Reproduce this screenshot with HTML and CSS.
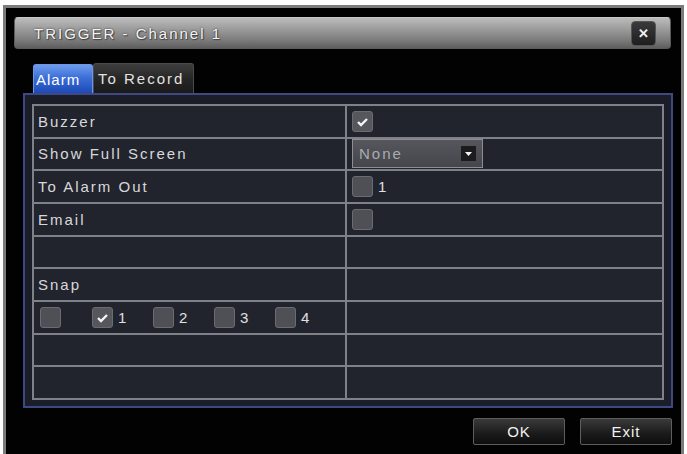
FILE: index.html
```html
<!DOCTYPE html>
<html lang="en">
<head>
    <meta charset="UTF-8">
    <title>TRIGGER - Channel 1</title>
    <link rel="stylesheet" href="styles.css">
</head>
<body>
<div class="dlg">
    <div class="titlebar">
        <span class="title">TRIGGER - Channel 1</span>
        <span class="close">&#x2715;</span>
    </div>
    <div class="tabs">
        <span class="tab on">Alarm</span><span class="tab">To Record</span>
    </div>
    <div class="panel">
        <div class="grid">
            <div class="cell">Buzzer</div>
            <div class="cell val"><span class="chk on"></span></div>

            <div class="cell">Show Full Screen</div>
            <div class="cell val">
                <span class="sel">None<i class="arrow"></i></span>
            </div>

            <div class="cell">To Alarm Out</div>
            <div class="cell val"><span class="chk"></span><span class="num">1</span></div>

            <div class="cell">Email</div>
            <div class="cell val"><span class="chk"></span></div>

            <div class="cell"></div>
            <div class="cell"></div>

            <div class="cell">Snap</div>
            <div class="cell"></div>

            <div class="cell snap">
                <span class="item first"><span class="chk"></span></span>
                <span class="item"><span class="chk on"></span><span class="num">1</span></span>
                <span class="item"><span class="chk"></span><span class="num">2</span></span>
                <span class="item"><span class="chk"></span><span class="num">3</span></span>
                <span class="item"><span class="chk"></span><span class="num">4</span></span>
            </div>
            <div class="cell"></div>

            <div class="cell"></div>
            <div class="cell"></div>

            <div class="cell"></div>
            <div class="cell"></div>
        </div>
    </div>
    <div class="btns">
        <span class="btn">OK</span><span class="btn">Exit</span>
    </div>
</div>
</body>
</html>
```

FILE: styles.css
```css
*{
    margin:0;
    padding:0;
    box-sizing: border-box;
}
html,body{
    width: 100%;
    height: 100%;
    overflow: hidden;
    background: #fff;
}
body{
    font-family: "Liberation Sans", Arial, sans-serif;
    font-size: 15px;
    letter-spacing: 2px;
    color: #d8d8da;
}
.dlg{
    width: 681px;
    height: 452px;
    margin: 5px 0 0 3px;
    border: 3px solid #7c7c7c;
    background: #020202;
}
/* title bar */
.titlebar{
    height: 32px;
    margin: 9px 10px 0 8px;
    padding: 0 14px 0 19px;
    display: flex;
    align-items: center;
    justify-content: space-between;
    border-radius: 4px;
    border: 1px solid #5a5a5a;
    border-top-color: #c8c8c8;
    background: linear-gradient(#bcbcbc, #999 40%, #7a7a7a 75%, #5e5e5e);
}
.title{
    color: #f4f4f4;
    text-shadow: 0 0 2px #333, 1px 1px 1px #444;
}
.close{
    width: 25px;
    height: 25px;
    margin-top: 1px;
    border-radius: 4px;
    border: 1px solid #555;
    background: linear-gradient(#3a3a3a, #1e1e1e);
    color: #f2f2f2;
    font-size: 13px;
    font-weight: bold;
    letter-spacing: 0;
    line-height: 23px;
    text-align: center;
}
/* tabs */
.tabs{
    height: 29px;
    margin-top: 15px;
    padding-left: 27px;
    display: flex;
    align-items: flex-end;
}
.tab{
    width: 101px;
    height: 30px;
    padding-left: 4px;
    line-height: 30px;
    border-radius: 3px 3px 0 0;
    border: 1px solid #4a4a4a;
    border-bottom: 0;
    background: linear-gradient(#3e3e3e, #262626 50%, #1a1a1a);
    color: #e2e2e2;
    letter-spacing: 2px;
}
.tab.on{
    width: 60px;
    height: 29px;
    line-height: 29px;
    padding: 0 2px;
    border-color: #6b95e8;
    background: linear-gradient(#6e9cec, #3c6fd8 45%, #1d49b4);
    color: #fff;
    letter-spacing: 1px;
}
/* panel with the grid */
.panel{
    width: 650px;
    height: 315px;
    margin-left: 17px;
    padding: 9px 7px 6px 7px;
    border: 2px solid #3e4984;
    background: #1b1d28;
}
.grid{
    height: 296px;
    padding: 2px;
    display: grid;
    grid-template-columns: 311px 1fr;
    grid-template-rows: repeat(9, 1fr);
    gap: 2px;
    background: #7e8187;
}
.cell{
    background: #22242d;
    padding-left: 4px;
    display: flex;
    align-items: center;
}
.cell.val{
    padding-left: 5px;
}
.chk{
    display: inline-block;
    width: 21px;
    height: 21px;
    border-radius: 3px;
    border: 1px solid #6a6c72;
    background: #4e5056;
}
.chk.on{
    background: #55575d url("data:image/svg+xml,%3Csvg xmlns='http://www.w3.org/2000/svg' width='19' height='19'%3E%3Cpath d='M5 10l3 3 6-6' fill='none' stroke='%23f4f4f4' stroke-width='2.4'/%3E%3C/svg%3E") no-repeat center;
}
.num{
    margin-left: 5px;
    color: #e0e0e0;
}
.sel{
    width: 131px;
    height: 29px;
    padding-left: 6px;
    display: flex;
    align-items: center;
    justify-content: space-between;
    border: 1px solid #8c8e93;
    background: linear-gradient(#55575c, #44464b);
    color: #a9abb0;
}
.arrow{
    width: 15px;
    height: 15px;
    margin-right: 6px;
    background: #1c1c1e url("data:image/svg+xml,%3Csvg xmlns='http://www.w3.org/2000/svg' width='15' height='15'%3E%3Cpath d='M4 6h7l-3.5 4z' fill='%23f4f4f4'/%3E%3C/svg%3E") no-repeat center;
}
.snap{
    padding-left: 6px;
}
.item{
    width: 61px;
    display: flex;
    align-items: center;
}
.item.first{
    width: 52px;
}
/* bottom buttons */
.btns{
    margin-top: 10px;
    padding-right: 9px;
    display: flex;
    justify-content: flex-end;
    gap: 15px;
}
.btn{
    width: 92px;
    height: 27px;
    line-height: 25px;
    text-align: center;
    border: 1px solid #5e5e5e;
    border-radius: 2px;
    background: linear-gradient(#3a3a3a, #1a1a1a 60%, #0e0e0e);
    color: #f2f2f2;
    letter-spacing: 1px;
}
```
